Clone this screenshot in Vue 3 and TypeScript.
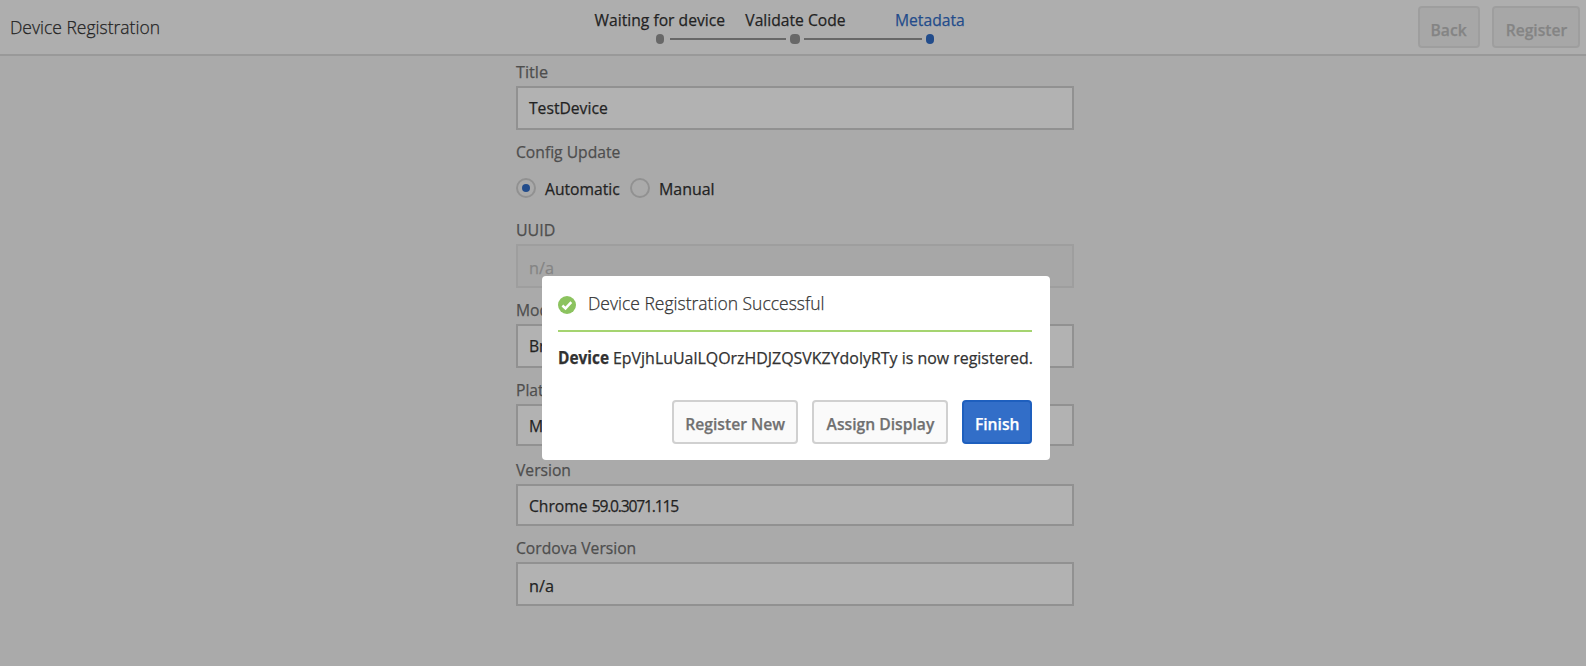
<script setup lang="ts">
interface Field {
  label: string
  value: string
  digits?: string
  kind?: string
  fit?: string
  labelFit?: string
}

const steps = [
  { label: 'Waiting for device', state: 'done' },
  { label: 'Validate Code', state: 'done middle' },
  { label: 'Metadata', state: 'current' },
]

const fields: Field[] = [
  { label: 'UUID', value: 'n/a', kind: 'disabled low', fit: 'wide', labelFit: 'mid' },
  { label: 'Model', value: 'Browser' },
  { label: 'Platform', value: 'MacIntel', kind: 'short' },
  { label: 'Version', value: 'Chrome ', digits: '59.0.3071.115', kind: 'short' },
  { label: 'Cordova Version', value: 'n/a', kind: 'low', fit: 'wide' },
]
</script>

<template>
  <div class="page">
    <header class="bar">
      <h1 class="title"><span class="t">Device Registration</span></h1>
      <ol class="steps">
        <li v-for="s in steps" :key="s.label" class="step" :class="s.state">
          <span class="t center">{{ s.label }}</span>
        </li>
        <li class="track">
          <i class="dot"></i><i class="line"></i><i class="dot big"></i><i class="line second"></i><i class="dot active"></i>
        </li>
      </ol>
      <div class="actions">
        <button class="btn back" disabled><span class="t center">Back</span></button>
        <button class="btn register" disabled><span class="t center">Register</span></button>
      </div>
    </header>

    <main class="form">
      <div class="field">
        <div class="label"><span class="t wide">Title</span></div>
        <div class="input"><span class="t">TestDevice</span></div>
      </div>
      <div class="radio-field">
        <div class="label"><span class="t">Config Update</span></div>
        <div class="radios">
          <div class="radio auto"><i class="circle on"></i><span class="t">Automatic</span></div>
          <div class="radio"><i class="circle"></i><span class="t mid">Manual</span></div>
        </div>
      </div>
      <div v-for="f in fields" :key="f.label" class="field" :class="f.kind">
        <div class="label"><span class="t" :class="f.labelFit">{{ f.label }}</span></div>
        <div class="input"><span class="t" :class="f.fit">{{ f.value }}<span v-if="f.digits" class="digits">{{ f.digits }}</span></span></div>
      </div>
    </main>

    <div class="overlay">
      <section class="dialog">
        <div class="dialog-head">
          <svg class="check" width="18" height="18" viewBox="0 0 18 18">
            <circle cx="9" cy="9" r="9" fill="#8cc35f" />
            <path d="M4.4 9.5 7.5 12.4 13.3 6.2" fill="none" stroke="#fff" stroke-width="2.5" />
          </svg>
          <h2 class="dialog-title"><span class="t">Device Registration Successful</span></h2>
        </div>
        <p class="message">
          <b class="t strong">Device</b><span class="t mid">EpVjhLuUalLQOrzHDJZQSVKZYdolyRTy is now registered.</span>
        </p>
        <div class="dialog-actions">
          <button class="btn new"><span class="t center">Register New</span></button>
          <button class="btn assign"><span class="t center">Assign Display</span></button>
          <button class="btn finish"><span class="t center">Finish</span></button>
        </div>
      </section>
    </div>
  </div>
</template>

<style>
body {
  margin: 0;
  background: #f4f4f4;
}
</style>

<style scoped>
* {
  box-sizing: border-box;
}

.page {
  position: relative;
  width: 1586px;
  height: 666px;
  overflow: hidden;
  background: #f4f4f4;
  color: #323232;
  font: 400 17px/24px 'Open Sans', 'Noto Sans', sans-serif;
  -webkit-text-stroke: 0.25px currentColor;
}

/* Slightly condensed lettering */
.t {
  display: inline-block;
  white-space: pre;
  transform: scaleX(0.921);
  transform-origin: 0 50%;
}
.t.center { transform-origin: 50% 50%; }
.t.wide { transform: scaleX(0.955); }
.t.mid { transform: scaleX(0.938); }
.digits { letter-spacing: -1.3px; }

h1, h2, p, ol { margin: 0; padding: 0; }

.bar {
  display: flex;
  height: 56px;
  background: #fafafa;
  border-bottom: 2px solid #dcdcdc;
}
.title {
  width: 592px;
  padding: 14px 0 0 9.5px;
  font-size: 19px;
  line-height: 26px;
  font-weight: 300;
}

.steps {
  display: grid;
  grid-template-columns: repeat(3, 135px);
  grid-template-rows: 34px 10px;
  list-style: none;
  height: 44px;
}
.step {
  display: flex;
  justify-content: center;
  padding: 8px 0 0 1px;
}
.step.current { color: #326ec8; }
.track {
  grid-column: 1 / -1;
  display: flex;
  align-items: center;
  padding-left: 64px;
}
.dot {
  width: 8px;
  height: 10px;
  border-radius: 4px;
  background: #969696;
}
.dot.big { width: 10px; }
.dot.active { background: #326ec8; }
.line {
  width: 116px;
  height: 2px;
  margin: 0 4px 0 6px;
  background: #969696;
}
.line.second {
  width: 118px;
  margin: 0 4px;
}

.actions {
  display: flex;
  gap: 12px;
  margin: 6px 6px 0 auto;
}

.btn {
  display: flex;
  justify-content: center;
  height: 44px;
  padding: 10px 0 0;
  border: 2px solid #d0d0d0;
  border-radius: 4px;
  background: #fafafa;
  color: #707070;
  font: 600 17px/24px 'Open Sans', 'Noto Sans', sans-serif;
}
.btn:disabled {
  height: 42px;
  border-color: #e3e3e3;
  background: #f0f0f0;
  color: #bebebe;
}
.back { width: 62px; }
.register { width: 88px; }

.form {
  width: 558px;
  margin: 4px 0 0 516px;
}
.label {
  height: 26px;
  color: #707070;
}
.field { margin-bottom: 10px; }
.input {
  height: 44px;
  padding: 8px 11px 0;
  border: 2px solid #d0d0d0;
  background: #fff;
}
.short .input { height: 42px; }
.field:nth-last-child(3) { margin-bottom: 12px; }
.low .input { padding-top: 10px; }
.disabled .input {
  border-color: #e3e3e3;
  background: #f0f0f0;
  color: #bebebe;
}

.radio-field { height: 78px; }
.radios {
  display: flex;
  padding-top: 11px;
}
.radio {
  display: flex;
  gap: 9px;
}
.radio.auto { width: 114px; }
.circle {
  display: grid;
  place-items: center;
  flex: none;
  width: 20px;
  height: 20px;
  margin-top: 1px;
  border: 2px solid #d0d0d0;
  border-radius: 50%;
}
.circle.on::after {
  content: '';
  width: 8px;
  height: 8px;
  border-radius: 50%;
  background: #326ec8;
}

.overlay {
  position: absolute;
  inset: 0;
  padding: 276px 0 0 542px;
  background: rgba(0, 0, 0, 0.3);
}
.dialog {
  width: 508px;
  height: 184px;
  padding: 0 18px 0 16px;
  border-radius: 4px;
  background: #fff;
}
.dialog-head {
  display: flex;
  height: 56px;
  border-bottom: 2px solid #a5d470;
}
.check { margin: 19.5px 11.5px 0 0; }
.dialog-title {
  padding-top: 14px;
  font-size: 19px;
  line-height: 26px;
  font-weight: 300;
}
.message {
  display: flex;
  height: 68px;
  padding-top: 14px;
}
.strong {
  flex: none;
  transform: scaleX(0.906);
}
.message .mid {
  margin-left: -1.2px;
  transform: scaleX(0.937);
}
.dialog-actions {
  display: flex;
  justify-content: flex-end;
  gap: 14px;
}
.new { width: 126px; }
.assign { width: 136px; }
.finish {
  width: 70px;
  border-color: #1e5fbe;
  background: #326ec8;
  color: #fff;
}
</style>
